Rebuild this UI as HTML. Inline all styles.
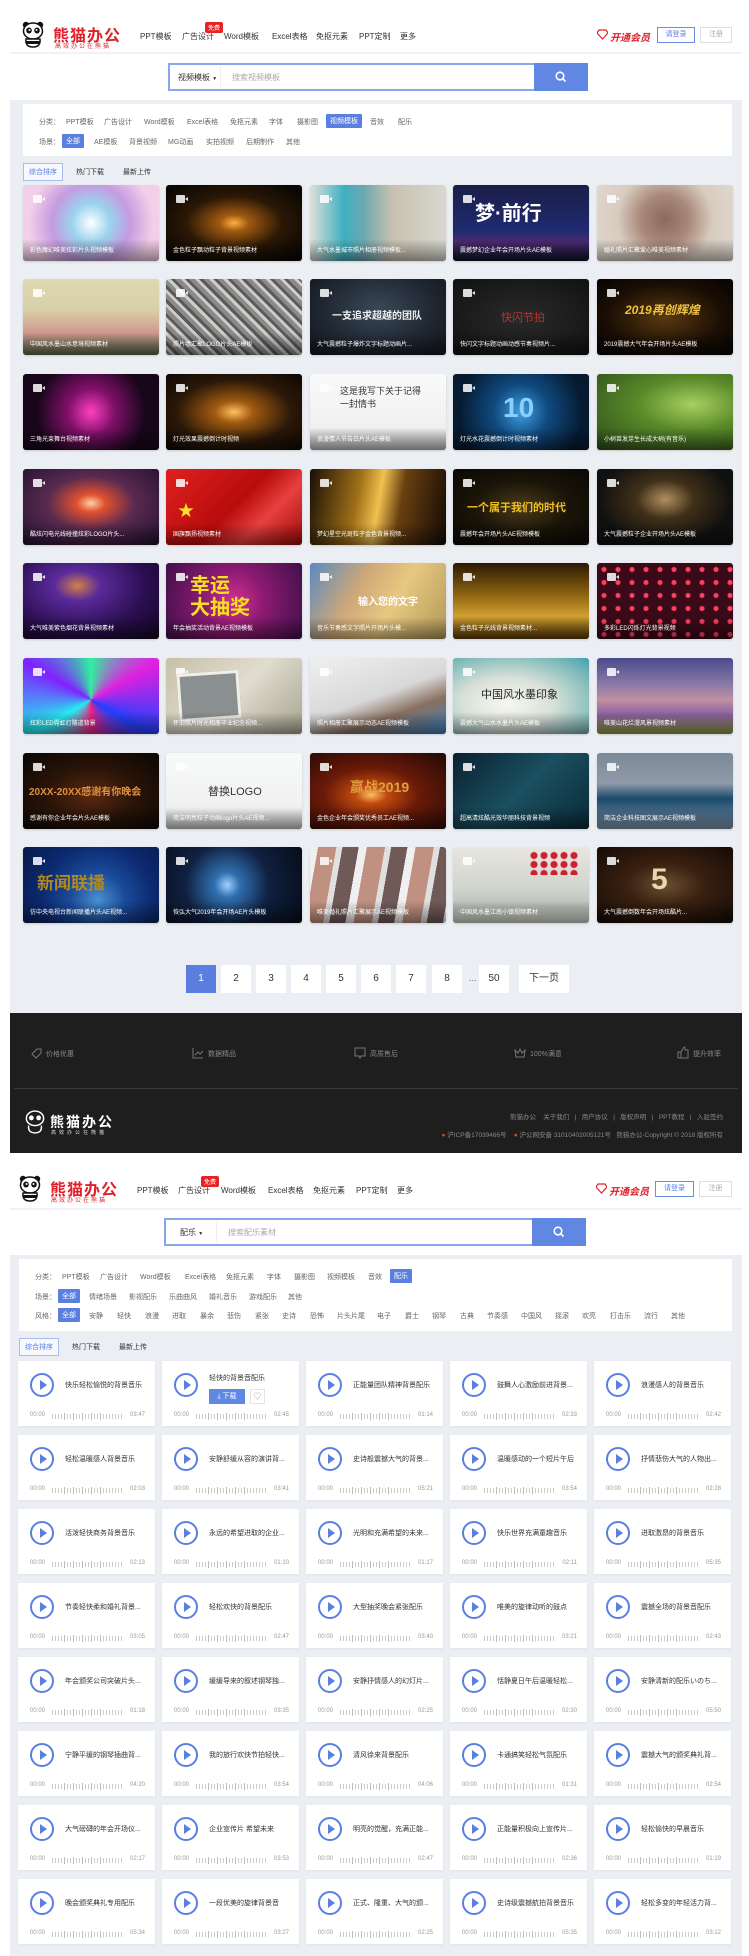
<!DOCTYPE html>
<html><head><meta charset="utf-8">
<style>
*{margin:0;padding:0;box-sizing:border-box}
body{width:749px;height:1956px;position:relative;background:#fff;font-family:"Liberation Sans","Noto Sans CJK SC",sans-serif;overflow:hidden;color:#333}
.a{position:absolute;white-space:nowrap}
.logo-t{font-size:16px;font-weight:bold;color:#e0202a;letter-spacing:1px}
.logo-s{font-size:6px;color:#e0202a;letter-spacing:2px}
.nav{font-size:8px;color:#333}
.badge{background:#e82222;color:#fff;font-size:6px;padding:1px 3px;border-radius:2px}
.vip{font-size:10px;color:#e0202a;font-weight:bold;font-style:italic}
.btn1{border:1px solid #6b8ee6;color:#5b7fe0;font-size:7px;text-align:center;line-height:14px;background:#fff}
.btn2{border:1px solid #ddd;color:#aaa;font-size:7px;text-align:center;line-height:14px}
.hline{position:absolute;left:10px;width:732px;height:2px;background:#f0f2f5}
.search{position:absolute;height:28px;border:2px solid #8aa6ec;background:#fff}
.search .sel{position:absolute;left:8px;top:7px;font-size:8px;color:#333}
.search .sep{position:absolute;left:50px;top:2px;width:1px;height:20px;background:#eee}
.search .ph{position:absolute;left:62px;top:7px;font-size:8px;color:#aaa}
.search .go{position:absolute;right:-2px;top:-2px;width:54px;height:28px;background:#6088e2}
.gray{position:absolute;left:10px;width:732px;background:#ebeef2}
.panel{position:absolute;background:#fff}
.f{position:absolute;font-size:7px;color:#666;white-space:nowrap}
.on{background:#5b7fe0;color:#fff;padding:2px 4px;border-radius:1px}
.sort{position:absolute;font-size:7px;color:#333}
.sortb{border:1px solid #a9bdf0;color:#5b7fe0;background:#f7f9ff;padding:3px 5px}
.th{position:absolute;width:136px;height:76px;border-radius:3px;overflow:hidden;box-shadow:0 1px 2px rgba(0,0,0,.15)}
.th i{position:absolute;left:10px;top:10px;width:9px;height:8px;background:rgba(255,255,255,.85);border-radius:1px}
.th i:after{content:"";position:absolute;right:-3px;top:2px;border-top:2px solid transparent;border-bottom:2px solid transparent;border-right:3px solid rgba(255,255,255,.85)}
.th b{position:absolute;left:0;right:0;bottom:0;height:22px;background:linear-gradient(transparent,rgba(0,0,0,.45))}
.th span{position:absolute;left:7px;bottom:7px;font-size:6px;color:#fff;white-space:nowrap;font-weight:normal}
.th em{position:absolute;font-style:normal;font-weight:bold;white-space:nowrap}
.pg{position:absolute;top:965px;height:28px;background:#fff;font-size:10px;color:#333;text-align:center;line-height:28px;width:30px}
.foot{position:absolute;left:10px;width:732px;top:1013px;height:140px;background:#1e1e1e}
.ft{position:absolute;font-size:7px;color:#888;white-space:nowrap}
.card{position:absolute;width:137px;height:65px;background:#fff;box-shadow:0 1px 2px rgba(0,0,0,.05)}
.card .p{position:absolute;left:12px;top:12px;width:24px;height:24px;border:2px solid #5b7fe0;border-radius:50%}
.card .p:after{content:"";position:absolute;left:8px;top:5px;border-top:5px solid transparent;border-bottom:5px solid transparent;border-left:7px solid #5b7fe0}
.card .t{position:absolute;left:47px;top:19px;font-size:7px;color:#333;white-space:nowrap}
.card .s{position:absolute;left:12px;top:51px;font-size:6px;color:#999}
.card .d{position:absolute;right:10px;top:51px;font-size:6px;color:#999}
.card .w{position:absolute;left:34px;right:32px;top:53px;height:5px;background:repeating-linear-gradient(90deg,#ccc 0 1px,transparent 1px 3px)}
.card .w:before{content:"";position:absolute;left:12px;top:-1px;width:40px;height:7px;background:repeating-linear-gradient(90deg,#bbb 0 1px,transparent 1px 9px)}
</style></head><body>

<svg class="a" style="left:22px;top:21px" width="22" height="27" viewBox="0 0 22 27"><circle cx="4" cy="4" r="3.2" fill="#111"/><circle cx="18" cy="4" r="3.2" fill="#111"/><ellipse cx="11" cy="10" rx="9.5" ry="8" fill="#fff" stroke="#111" stroke-width="1.5"/><ellipse cx="7" cy="9.5" rx="2.8" ry="3" fill="#111"/><ellipse cx="15" cy="9.5" rx="2.8" ry="3" fill="#111"/><circle cx="7.5" cy="9" r="1" fill="#fff"/><circle cx="14.5" cy="9" r="1" fill="#fff"/><path d="M4 18 Q3 26 11 26 Q19 26 18 18 Z" fill="#fff" stroke="#111" stroke-width="1.5"/><path d="M4 20 h14 v3 h-14z" fill="#111"/></svg>
<div class="a logo-t" style="left:53px;top:22px">熊猫办公</div>
<div class="a logo-s" style="left:55px;top:41px">高效办公在熊猫</div>
<div class="a nav" style="left:140px;top:31px">PPT模板</div>
<div class="a nav" style="left:182px;top:31px">广告设计</div>
<div class="a badge" style="left:205px;top:22px">免费</div>
<div class="a nav" style="left:224px;top:31px">Word模板</div>
<div class="a nav" style="left:272px;top:31px">Excel表格</div>
<div class="a nav" style="left:316px;top:31px">免抠元素</div>
<div class="a nav" style="left:359px;top:31px">PPT定制</div>
<div class="a nav" style="left:400px;top:31px">更多</div>
<svg class="a" style="left:597px;top:29px" width="11" height="11" viewBox="0 0 11 11"><path d="M2 1h7l2 3-5.5 6L0 4z" fill="none" stroke="#e0202a" stroke-width="1.2"/></svg>
<div class="a vip" style="left:610px;top:29px">开通会员</div>
<div class="a btn1" style="left:657px;top:27px;width:38px;height:16px">请登录</div>
<div class="a btn2" style="left:700px;top:27px;width:32px;height:16px">注册</div>
<div class="hline" style="top:52px"></div>

<div class="search" style="left:168px;top:63px;width:420px">
<div class="sel">视频模板 <span style="font-size:5px">▼</span></div><div class="sep"></div><div class="ph">搜索视频模板</div>
<div class="go"><svg style="position:absolute;left:21px;top:8px" width="12" height="12" viewBox="0 0 12 12"><circle cx="5" cy="5" r="3.8" fill="none" stroke="#fff" stroke-width="1.6"/><path d="M8 8l2.5 2.5" stroke="#fff" stroke-width="1.6"/></svg></div>
</div>

<div class="gray" style="top:100px;height:913px"></div>
<div class="panel" style="left:23px;top:104px;width:709px;height:52px"></div>
<div class="f" style="left:39px;top:117px">分类：</div>
<div class="f" style="left:66px;top:117px">PPT模板</div>
<div class="f" style="left:104px;top:117px">广告设计</div>
<div class="f" style="left:144px;top:117px">Word模板</div>
<div class="f" style="left:187px;top:117px">Excel表格</div>
<div class="f" style="left:230px;top:117px">免抠元素</div>
<div class="f" style="left:269px;top:117px">字体</div>
<div class="f" style="left:297px;top:117px">摄影图</div>
<div class="f on" style="left:326px;top:114px">视频模板</div>
<div class="f" style="left:370px;top:117px">音效</div>
<div class="f" style="left:398px;top:117px">配乐</div>
<div class="f" style="left:39px;top:137px">场景：</div>
<div class="f on" style="left:62px;top:134px">全部</div>
<div class="f" style="left:94px;top:137px">AE模板</div>
<div class="f" style="left:129px;top:137px">背景视频</div>
<div class="f" style="left:168px;top:137px">MG动画</div>
<div class="f" style="left:206px;top:137px">实拍视频</div>
<div class="f" style="left:246px;top:137px">后期制作</div>
<div class="f" style="left:286px;top:137px">其他</div>
<div class="sort sortb" style="left:23px;top:163px">综合排序</div>
<div class="sort" style="left:76px;top:167px">热门下载</div>
<div class="sort" style="left:123px;top:167px">最新上传</div>

<div class="th" style="left:23px;top:185px;background:radial-gradient(circle at 50% 50%,#fff 0,#9ad3ee 25%,#c59be0 50%,#f3cfe8 80%)"><i></i><b></b><span>彩色魔幻唯美炫彩片头视频模板</span></div>
<div class="th" style="left:166px;top:185px;background:radial-gradient(ellipse at 50% 50%,#ffb040 0,#a05a10 15%,#2a1805 50%,#0a0604 90%)"><i></i><b></b><span>金色粒子飘动粒子背景视频素材</span></div>
<div class="th" style="left:310px;top:185px;background:linear-gradient(90deg,#e0e0da 0,#3db0c0 25%,#6fa8b0 40%,#c8c0b0 60%,#d8d8d0 100%)"><i></i><b></b><span>大气水墨城市照片相册视频模板...</span></div>
<div class="th" style="left:453px;top:185px;background:linear-gradient(180deg,#1a1e48 0,#202a70 60%,#4a2a70 75%,#10142a 100%)"><i></i><em style="left:22px;top:12px;font-size:20px;color:#fff">梦·前行</em><b></b><span>震撼梦幻企业年会开场片头AE模板</span></div>
<div class="th" style="left:597px;top:185px;background:radial-gradient(circle at 50% 45%,#8a6a5a 0,#a88878 30%,#d8ccc0 60%,#e0d8d0 100%)"><i></i><b></b><span>婚礼照片汇聚爱心唯美视频素材</span></div>
<div class="th" style="left:23px;top:279px;background:linear-gradient(180deg,#e0d8b0 0,#d8d0a8 40%,#d09a90 70%,#5a6a48 100%)"><i></i><b></b><span>中国风水墨山水意境视频素材</span></div>
<div class="th" style="left:166px;top:279px;background:repeating-linear-gradient(45deg,#8a8a8a 0 4px,#d0ccc8 4px 7px,#5a5a5a 7px 10px)"><i></i><b></b><span>照片墙汇聚LOGO片头AE模板</span></div>
<div class="th" style="left:310px;top:279px;background:radial-gradient(ellipse at 50% 40%,#3a4858 0,#1e2630 60%,#12161c 100%)"><i></i><em style="left:22px;top:28px;font-size:10px;color:#eee">一支追求超越的团队</em><b></b><span>大气震撼粒子爆炸文字标题动画片...</span></div>
<div class="th" style="left:453px;top:279px;background:radial-gradient(ellipse at 50% 50%,#2a2a2a 0,#111 100%)"><i></i><em style="left:48px;top:30px;font-size:11px;color:#c03030;font-weight:normal">快闪节拍</em><b></b><span>快闪文字标题动画动感节奏视频片...</span></div>
<div class="th" style="left:597px;top:279px;background:radial-gradient(ellipse at 50% 50%,#5a3a10 0,#1a0e04 60%,#050302 100%)"><i></i><em style="left:28px;top:22px;font-size:12px;color:#f0c040;font-style:italic">2019再创辉煌</em><b></b><span>2019震撼大气年会开场片头AE模板</span></div>
<div class="th" style="left:23px;top:374px;background:radial-gradient(circle at 50% 50%,#ff40c0 0,#80106a 30%,#18061a 70%)"><i></i><b></b><span>三角光束舞台视频素材</span></div>
<div class="th" style="left:166px;top:374px;background:radial-gradient(ellipse at 50% 50%,#ffc060 0,#a05a10 20%,#2a1808 60%,#100804 100%)"><i></i><b></b><span>灯光效果震撼倒计时视频</span></div>
<div class="th" style="left:310px;top:374px;background:linear-gradient(180deg,#fafafa 0,#f0f0f0 70%,#c0c0c0 100%)"><i></i><em style="left:30px;top:10px;font-size:9px;color:#333;font-weight:normal">这是我写下关于记得<br>一封情书</em><b></b><span>浪漫情人节告白片头AE模板</span></div>
<div class="th" style="left:453px;top:374px;background:radial-gradient(circle at 50% 50%,#40a0e0 0,#104a80 35%,#061a30 80%)"><i></i><em style="left:50px;top:18px;font-size:28px;color:#8ad0ff">10</em><b></b><span>灯光水花震撼倒计时视频素材</span></div>
<div class="th" style="left:597px;top:374px;background:radial-gradient(ellipse at 70% 40%,#a8d060 0,#5a8a2a 40%,#2a4a18 100%)"><i></i><b></b><span>小树苗发芽生长成大树(有音乐)</span></div>
<div class="th" style="left:23px;top:469px;background:radial-gradient(ellipse at 50% 45%,#ffd0a0 0,#e05030 15%,#5a2a50 45%,#201030 100%)"><i></i><b></b><span>酷炫闪电光线碰撞炫彩LOGO片头...</span></div>
<div class="th" style="left:166px;top:469px;background:linear-gradient(135deg,#e02020 0,#b80c0c 50%,#e84040 70%,#a00808 100%)"><i></i><em style="left:12px;top:28px;font-size:16px;color:#f8e030">★</em><b></b><span>国旗飘扬视频素材</span></div>
<div class="th" style="left:310px;top:469px;background:linear-gradient(100deg,#1a1006 0,#a07018 35%,#f0c050 50%,#6a4010 65%,#140a04 100%)"><i></i><b></b><span>梦幻星空光斑粒子金色背景视频...</span></div>
<div class="th" style="left:453px;top:469px;background:radial-gradient(ellipse at 50% 50%,#4a3a18 0,#1a1408 50%,#0a0804 100%)"><i></i><em style="left:14px;top:30px;font-size:11px;color:#f0c020">一个属于我们的时代</em><b></b><span>震撼年会开场片头AE视频模板</span></div>
<div class="th" style="left:597px;top:469px;background:radial-gradient(ellipse at 50% 40%,#b09060 0,#403018 30%,#101010 70%)"><i></i><b></b><span>大气震撼粒子企业开场片头AE模板</span></div>
<div class="th" style="left:23px;top:563px;background:radial-gradient(ellipse at 40% 30%,#d0804a 0,#5a2a9a 20%,#2a0e50 60%,#10061e 100%)"><i></i><b></b><span>大气唯美紫色烟花背景视频素材</span></div>
<div class="th" style="left:166px;top:563px;background:radial-gradient(circle at 50% 50%,#d03090 0,#8a1a70 40%,#40104a 100%)"><i></i><em style="left:24px;top:12px;font-size:20px;color:#f8e020;line-height:22px">幸运<br>大抽奖</em><b></b><span>年会抽奖活动背景AE视频模板</span></div>
<div class="th" style="left:310px;top:563px;background:linear-gradient(120deg,#5a8ac0 0,#d0a878 35%,#e8c880 60%,#b09858 100%)"><i></i><em style="left:48px;top:30px;font-size:10px;color:#fff">输入您的文字</em><b></b><span>音乐节奏感文字照片开场片头模...</span></div>
<div class="th" style="left:453px;top:563px;background:linear-gradient(180deg,#2a1a04 0,#8a6010 40%,#d0a030 70%,#5a3a08 100%)"><i></i><b></b><span>金色粒子光线背景视频素材...</span></div>
<div class="th" style="left:597px;top:563px;background:radial-gradient(circle,#ff4060 0 2px,transparent 3px) 0 0/14px 13px,#3a0a18"><i></i><b></b><span>多彩LED闪烁灯光背景视频</span></div>
<div class="th" style="left:23px;top:658px;background:conic-gradient(from 0deg at 50% 55%,#30f0a0,#e020e0,#2040ff,#f02080,#20f0f0,#8020ff,#30f0a0)"><i></i><b></b><span>炫彩LED霓虹灯隧道背景</span></div>
<div class="th" style="left:166px;top:658px;background:linear-gradient(135deg,#c8c0a8 0,#e0dccf 50%,#a8a490 100%)"><i></i><div class="a" style="left:12px;top:14px;width:62px;height:48px;background:#8a9090;border:3px solid #f0f0e8;transform:rotate(-4deg)"></div><b></b><span>怀旧照片时光相册毕业纪念视频...</span></div>
<div class="th" style="left:310px;top:658px;background:linear-gradient(160deg,#f0f0f0 0,#d8d8d8 50%,#8a7060 70%,#3a80c0 100%)"><i></i><b></b><span>照片相册汇聚展示动态AE视频模板</span></div>
<div class="th" style="left:453px;top:658px;background:radial-gradient(ellipse at 40% 60%,#f8f8f0 0,#d8e0d8 40%,#7ab8b8 80%,#40a0b0 100%)"><i></i><em style="left:28px;top:28px;font-size:11px;color:#222;font-weight:normal">中国风水墨印象</em><b></b><span>震撼大气山水水墨片头AE模板</span></div>
<div class="th" style="left:597px;top:658px;background:linear-gradient(180deg,#4a4a8a 0,#8a7aa8 35%,#c090a0 55%,#8a60a0 75%,#90a040 100%)"><i></i><b></b><span>唯美山花烂漫风景视频素材</span></div>
<div class="th" style="left:23px;top:753px;background:radial-gradient(ellipse at 50% 55%,#5a2a10 0,#2a1408 45%,#0a0604 100%)"><i></i><em style="left:6px;top:30px;font-size:10px;color:#e09040">20XX-20XX感谢有你晚会</em><b></b><span>感谢有你企业年会片头AE模板</span></div>
<div class="th" style="left:166px;top:753px;background:linear-gradient(180deg,#f8fafa 0,#f0f0f0 75%,#c8c8c8 100%)"><i></i><em style="left:42px;top:30px;font-size:11px;color:#333;font-weight:normal">替换LOGO</em><b></b><span>简洁明亮粒子动画logo片头AE视频...</span></div>
<div class="th" style="left:310px;top:753px;background:radial-gradient(ellipse at 45% 55%,#ffc060 0,#c04a10 15%,#6a1a08 45%,#200806 100%)"><i></i><em style="left:40px;top:24px;font-size:14px;color:#e0a040">赢战2019</em><b></b><span>金色企业年会颁奖优秀员工AE视频...</span></div>
<div class="th" style="left:453px;top:753px;background:linear-gradient(135deg,#0a2030 0,#1a5060 50%,#0a2a38 100%)"><i></i><b></b><span>超高清炫酷光效华丽科技背景视频</span></div>
<div class="th" style="left:597px;top:753px;background:linear-gradient(180deg,#7a8a98 0,#909aa8 40%,#1a4a6a 60%,#8098b0 100%)"><i></i><b></b><span>简洁企业科技图文展示AE视频模板</span></div>
<div class="th" style="left:23px;top:847px;background:radial-gradient(circle at 55% 70%,#4a90d0 0,#1a4a9a 30%,#0c2a70 60%,#081a4a 100%)"><i></i><em style="left:14px;top:22px;font-size:17px;color:#b08a20">新闻联播</em><b></b><span>仿中央电视台新闻联播片头AE视频...</span></div>
<div class="th" style="left:166px;top:847px;background:radial-gradient(circle at 45% 50%,#a0d0ff 0,#3070b0 15%,#102040 50%,#060c1a 100%)"><i></i><b></b><span>恢弘大气2019年会开场AE片头模板</span></div>
<div class="th" style="left:310px;top:847px;background:repeating-linear-gradient(100deg,#f0f0f0 0 8px,#c09080 8px 26px,#e0e0e0 26px 32px,#705a58 32px 48px)"><i></i><b></b><span>唯美婚礼照片汇聚展示AE视频模板</span></div>
<div class="th" style="left:453px;top:847px;background:linear-gradient(180deg,#e8e6e0 0,#d0d4cc 55%,#b8c0b8 80%,#d8d8d0 100%)"><i></i><div class="a" style="right:10px;top:4px;width:50px;height:24px;background:radial-gradient(circle,#d02030 0 3px,transparent 4px) 0 0/10px 9px"></div><b></b><span>中国风水墨江南小镇视频素材</span></div>
<div class="th" style="left:597px;top:847px;background:radial-gradient(ellipse at 50% 50%,#6a5030 0,#3a2010 40%,#140a06 100%)"><i></i><em style="left:54px;top:16px;font-size:30px;color:#e8d8b0">5</em><b></b><span>大气震撼倒数年会开场炫酷片...</span></div>

<div class="pg" style="left:186px;background:#5b7fe0;color:#fff">1</div>
<div class="pg" style="left:221px">2</div>
<div class="pg" style="left:256px">3</div>
<div class="pg" style="left:291px">4</div>
<div class="pg" style="left:326px">5</div>
<div class="pg" style="left:361px">6</div>
<div class="pg" style="left:396px">7</div>
<div class="pg" style="left:432px">8</div>
<div class="a" style="left:469px;top:973px;font-size:9px;color:#666">...</div>
<div class="pg" style="left:479px">50</div>
<div class="pg" style="left:519px;width:50px">下一页</div>

<div class="foot">
<svg class="a" style="left:20px;top:34px" width="12" height="12" viewBox="0 0 12 12"><path d="M2 7l5-5h4v4l-5 5z" fill="none" stroke="#777"/></svg>
<div class="ft" style="left:36px;top:36px">价格优惠</div>
<svg class="a" style="left:182px;top:34px" width="12" height="12" viewBox="0 0 12 12"><path d="M1 1v10h10M3 8l3-3 2 2 3-3" fill="none" stroke="#777"/></svg>
<div class="ft" style="left:198px;top:36px">数据精品</div>
<svg class="a" style="left:344px;top:34px" width="12" height="12" viewBox="0 0 12 12"><path d="M1 1h10v8H7l-1 2-1-2H1z" fill="none" stroke="#777"/></svg>
<div class="ft" style="left:360px;top:36px">高质售后</div>
<svg class="a" style="left:504px;top:34px" width="12" height="12" viewBox="0 0 12 12"><path d="M1 3l3 3 2-4 2 4 3-3-1 7H2z" fill="none" stroke="#777"/></svg>
<div class="ft" style="left:520px;top:36px">100%满意</div>
<svg class="a" style="left:667px;top:33px" width="12" height="13" viewBox="0 0 12 13"><path d="M1 6h3v6H1zM4 6l3-5c1 0 1.5 1 1 3h3v8H4" fill="none" stroke="#777"/></svg>
<div class="ft" style="left:683px;top:36px">提升效率</div>
<div class="a" style="left:4px;top:75px;width:724px;height:1px;background:#383838"></div>
<svg class="a" style="left:15px;top:95px" width="20" height="27" viewBox="0 0 22 27"><ellipse cx="11" cy="10" rx="9.5" ry="8" fill="none" stroke="#fff" stroke-width="1.6"/><ellipse cx="7" cy="9.5" rx="2.6" ry="2.8" fill="#fff"/><ellipse cx="15" cy="9.5" rx="2.6" ry="2.8" fill="#fff"/><path d="M4 18 Q3 26 11 26 Q19 26 18 18" fill="none" stroke="#fff" stroke-width="1.6"/></svg>
<div class="a" style="left:40px;top:99px;font-size:14px;font-weight:bold;color:#fff;letter-spacing:2px">熊猫办公</div>
<div class="a" style="left:41px;top:116px;font-size:5px;color:#ddd;letter-spacing:3px">高效办公在熊猫</div>
<div class="ft" style="right:19px;top:98px;font-size:6.5px">熊猫办公 &nbsp;&nbsp; 关于我们 &nbsp;&nbsp;| &nbsp;&nbsp;用户协议 &nbsp;&nbsp;| &nbsp;&nbsp;版权声明 &nbsp;&nbsp;| &nbsp;&nbsp;PPT教程 &nbsp;&nbsp;| &nbsp;&nbsp;入驻签约</div>
<div class="ft" style="right:19px;top:116px;font-size:6.5px"><span style="color:#d84a20">●</span> 沪ICP备17039466号 &nbsp;&nbsp;&nbsp;<span style="color:#d84a20">●</span> 沪公网安备 31010402005121号 &nbsp; 熊猫办公-Copyright © 2018 版权所有</div>
</div>

<svg class="a" style="left:19px;top:1175px" width="22" height="27" viewBox="0 0 22 27"><circle cx="4" cy="4" r="3.2" fill="#111"/><circle cx="18" cy="4" r="3.2" fill="#111"/><ellipse cx="11" cy="10" rx="9.5" ry="8" fill="#fff" stroke="#111" stroke-width="1.5"/><ellipse cx="7" cy="9.5" rx="2.8" ry="3" fill="#111"/><ellipse cx="15" cy="9.5" rx="2.8" ry="3" fill="#111"/><circle cx="7.5" cy="9" r="1" fill="#fff"/><circle cx="14.5" cy="9" r="1" fill="#fff"/><path d="M4 18 Q3 26 11 26 Q19 26 18 18 Z" fill="#fff" stroke="#111" stroke-width="1.5"/><path d="M4 20 h14 v3 h-14z" fill="#111"/></svg>
<div class="a logo-t" style="left:50px;top:1176px">熊猫办公</div>
<div class="a logo-s" style="left:51px;top:1195px">高效办公在熊猫</div>
<div class="a nav" style="left:137px;top:1185px">PPT模板</div>
<div class="a nav" style="left:178px;top:1185px">广告设计</div>
<div class="a badge" style="left:201px;top:1176px">免费</div>
<div class="a nav" style="left:221px;top:1185px">Word模板</div>
<div class="a nav" style="left:268px;top:1185px">Excel表格</div>
<div class="a nav" style="left:313px;top:1185px">免抠元素</div>
<div class="a nav" style="left:356px;top:1185px">PPT定制</div>
<div class="a nav" style="left:397px;top:1185px">更多</div>
<svg class="a" style="left:596px;top:1183px" width="11" height="11" viewBox="0 0 11 11"><path d="M2 1h7l2 3-5.5 6L0 4z" fill="none" stroke="#e0202a" stroke-width="1.2"/></svg>
<div class="a vip" style="left:609px;top:1183px">开通会员</div>
<div class="a btn1" style="left:655px;top:1181px;width:39px;height:16px">请登录</div>
<div class="a btn2" style="left:699px;top:1181px;width:33px;height:16px">注册</div>
<div class="hline" style="top:1208px"></div>

<div class="search" style="left:164px;top:1218px;width:422px">
<div class="sel" style="left:14px">配乐 <span style="font-size:5px">▼</span></div><div class="sep"></div><div class="ph">搜索配乐素材</div>
<div class="go"><svg style="position:absolute;left:21px;top:8px" width="12" height="12" viewBox="0 0 12 12"><circle cx="5" cy="5" r="3.8" fill="none" stroke="#fff" stroke-width="1.6"/><path d="M8 8l2.5 2.5" stroke="#fff" stroke-width="1.6"/></svg></div>
</div>

<div class="gray" style="top:1255px;height:701px"></div>
<div class="panel" style="left:19px;top:1259px;width:713px;height:72px"></div>
<div class="f" style="left:35px;top:1272px">分类：</div>
<div class="f" style="left:62px;top:1272px">PPT模板</div>
<div class="f" style="left:100px;top:1272px">广告设计</div>
<div class="f" style="left:140px;top:1272px">Word模板</div>
<div class="f" style="left:185px;top:1272px">Excel表格</div>
<div class="f" style="left:226px;top:1272px">免抠元素</div>
<div class="f" style="left:267px;top:1272px">字体</div>
<div class="f" style="left:294px;top:1272px">摄影图</div>
<div class="f" style="left:327px;top:1272px">视频模板</div>
<div class="f" style="left:368px;top:1272px">音效</div>
<div class="f on" style="left:390px;top:1269px">配乐</div>
<div class="f" style="left:35px;top:1292px">场景：</div>
<div class="f on" style="left:58px;top:1289px">全部</div>
<div class="f" style="left:89px;top:1292px">情绪场景</div>
<div class="f" style="left:129px;top:1292px">影视配乐</div>
<div class="f" style="left:169px;top:1292px">乐曲曲风</div>
<div class="f" style="left:209px;top:1292px">婚礼音乐</div>
<div class="f" style="left:249px;top:1292px">游戏配乐</div>
<div class="f" style="left:288px;top:1292px">其他</div>
<div class="f" style="left:35px;top:1311px">风格：</div>
<div class="f on" style="left:58px;top:1308px">全部</div>
<div class="f" style="left:89px;top:1311px">安静</div>
<div class="f" style="left:117px;top:1311px">轻快</div>
<div class="f" style="left:145px;top:1311px">浪漫</div>
<div class="f" style="left:172px;top:1311px">进取</div>
<div class="f" style="left:200px;top:1311px">暴余</div>
<div class="f" style="left:227px;top:1311px">悲伤</div>
<div class="f" style="left:255px;top:1311px">紧张</div>
<div class="f" style="left:282px;top:1311px">史诗</div>
<div class="f" style="left:310px;top:1311px">恐怖</div>
<div class="f" style="left:337px;top:1311px">片头片尾</div>
<div class="f" style="left:377px;top:1311px">电子</div>
<div class="f" style="left:405px;top:1311px">爵士</div>
<div class="f" style="left:432px;top:1311px">钢琴</div>
<div class="f" style="left:460px;top:1311px">古典</div>
<div class="f" style="left:487px;top:1311px">节奏感</div>
<div class="f" style="left:521px;top:1311px">中国风</div>
<div class="f" style="left:555px;top:1311px">摇滚</div>
<div class="f" style="left:582px;top:1311px">欢亮</div>
<div class="f" style="left:610px;top:1311px">打击乐</div>
<div class="f" style="left:644px;top:1311px">流行</div>
<div class="f" style="left:671px;top:1311px">其他</div>
<div class="sort sortb" style="left:19px;top:1338px">综合排序</div>
<div class="sort" style="left:72px;top:1342px">热门下载</div>
<div class="sort" style="left:119px;top:1342px">最新上传</div>

<div class="card" style="left:18px;top:1361px"><div class="p"></div><div class="t">快乐轻松愉悦的背景音乐</div><div class="s">00:00</div><div class="w"></div><div class="d">03:47</div></div>
<div class="card" style="left:162px;top:1361px"><div class="p"></div><div class="t" style="top:12px">轻快的背景音配乐</div><div class="a" style="left:47px;top:28px;width:36px;height:15px;background:#6088e2;color:#fff;font-size:7px;line-height:15px;text-align:center">⤓ 下载</div><div class="a" style="left:88px;top:28px;width:15px;height:15px;border:1px solid #e4e4e4;color:#999;font-size:8px;line-height:13px;text-align:center">♡</div><div class="s">00:00</div><div class="w"></div><div class="d">02:45</div></div>
<div class="card" style="left:306px;top:1361px"><div class="p"></div><div class="t">正能量团队精神背景配乐</div><div class="s">00:00</div><div class="w"></div><div class="d">01:14</div></div>
<div class="card" style="left:450px;top:1361px"><div class="p"></div><div class="t">鼓舞人心激励前进背景...</div><div class="s">00:00</div><div class="w"></div><div class="d">02:33</div></div>
<div class="card" style="left:594px;top:1361px"><div class="p"></div><div class="t">浪漫感人的背景音乐</div><div class="s">00:00</div><div class="w"></div><div class="d">02:42</div></div>

<div class="card" style="left:18px;top:1435px"><div class="p"></div><div class="t">轻松温暖感人背景音乐</div><div class="s">00:00</div><div class="w"></div><div class="d">02:03</div></div>
<div class="card" style="left:162px;top:1435px"><div class="p"></div><div class="t">安静舒缓从容的演讲背...</div><div class="s">00:00</div><div class="w"></div><div class="d">03:41</div></div>
<div class="card" style="left:306px;top:1435px"><div class="p"></div><div class="t">史诗般震撼大气的背景...</div><div class="s">00:00</div><div class="w"></div><div class="d">05:21</div></div>
<div class="card" style="left:450px;top:1435px"><div class="p"></div><div class="t">温暖感动的一个短片午后</div><div class="s">00:00</div><div class="w"></div><div class="d">03:54</div></div>
<div class="card" style="left:594px;top:1435px"><div class="p"></div><div class="t">抒情悲伤大气的人物出...</div><div class="s">00:00</div><div class="w"></div><div class="d">02:28</div></div>

<div class="card" style="left:18px;top:1509px"><div class="p"></div><div class="t">活泼轻快商务背景音乐</div><div class="s">00:00</div><div class="w"></div><div class="d">02:13</div></div>
<div class="card" style="left:162px;top:1509px"><div class="p"></div><div class="t">永远的希望进取的企业...</div><div class="s">00:00</div><div class="w"></div><div class="d">01:10</div></div>
<div class="card" style="left:306px;top:1509px"><div class="p"></div><div class="t">光明和充满希望的未来...</div><div class="s">00:00</div><div class="w"></div><div class="d">01:17</div></div>
<div class="card" style="left:450px;top:1509px"><div class="p"></div><div class="t">快乐世界充满童趣音乐</div><div class="s">00:00</div><div class="w"></div><div class="d">02:11</div></div>
<div class="card" style="left:594px;top:1509px"><div class="p"></div><div class="t">进取激昂的背景音乐</div><div class="s">00:00</div><div class="w"></div><div class="d">05:35</div></div>

<div class="card" style="left:18px;top:1583px"><div class="p"></div><div class="t">节奏轻快柔和婚礼背景...</div><div class="s">00:00</div><div class="w"></div><div class="d">03:05</div></div>
<div class="card" style="left:162px;top:1583px"><div class="p"></div><div class="t">轻松欢快的背景配乐</div><div class="s">00:00</div><div class="w"></div><div class="d">02:47</div></div>
<div class="card" style="left:306px;top:1583px"><div class="p"></div><div class="t">大型抽奖晚会紧张配乐</div><div class="s">00:00</div><div class="w"></div><div class="d">03:40</div></div>
<div class="card" style="left:450px;top:1583px"><div class="p"></div><div class="t">唯美的旋律动听的鼓点</div><div class="s">00:00</div><div class="w"></div><div class="d">03:21</div></div>
<div class="card" style="left:594px;top:1583px"><div class="p"></div><div class="t">震撼全场的背景音配乐</div><div class="s">00:00</div><div class="w"></div><div class="d">02:43</div></div>

<div class="card" style="left:18px;top:1657px"><div class="p"></div><div class="t">年会颁奖公司突破片头...</div><div class="s">00:00</div><div class="w"></div><div class="d">01:18</div></div>
<div class="card" style="left:162px;top:1657px"><div class="p"></div><div class="t">缓缓导来的叙述钢琴独...</div><div class="s">00:00</div><div class="w"></div><div class="d">03:35</div></div>
<div class="card" style="left:306px;top:1657px"><div class="p"></div><div class="t">安静抒情感人的幻灯片...</div><div class="s">00:00</div><div class="w"></div><div class="d">02:25</div></div>
<div class="card" style="left:450px;top:1657px"><div class="p"></div><div class="t">恬静夏日午后温暖轻松...</div><div class="s">00:00</div><div class="w"></div><div class="d">02:30</div></div>
<div class="card" style="left:594px;top:1657px"><div class="p"></div><div class="t">安静清新的配乐いのち...</div><div class="s">00:00</div><div class="w"></div><div class="d">05:50</div></div>

<div class="card" style="left:18px;top:1731px"><div class="p"></div><div class="t">宁静平缓的钢琴插曲背...</div><div class="s">00:00</div><div class="w"></div><div class="d">04:20</div></div>
<div class="card" style="left:162px;top:1731px"><div class="p"></div><div class="t">我的旅行欢快节拍轻快...</div><div class="s">00:00</div><div class="w"></div><div class="d">03:54</div></div>
<div class="card" style="left:306px;top:1731px"><div class="p"></div><div class="t">清风徐来背景配乐</div><div class="s">00:00</div><div class="w"></div><div class="d">04:06</div></div>
<div class="card" style="left:450px;top:1731px"><div class="p"></div><div class="t">卡通搞笑轻松气氛配乐</div><div class="s">00:00</div><div class="w"></div><div class="d">01:31</div></div>
<div class="card" style="left:594px;top:1731px"><div class="p"></div><div class="t">震撼大气的颁奖典礼背...</div><div class="s">00:00</div><div class="w"></div><div class="d">02:54</div></div>

<div class="card" style="left:18px;top:1805px"><div class="p"></div><div class="t">大气磅礴的年会开场仪...</div><div class="s">00:00</div><div class="w"></div><div class="d">02:17</div></div>
<div class="card" style="left:162px;top:1805px"><div class="p"></div><div class="t">企业宣传片 希望未来</div><div class="s">00:00</div><div class="w"></div><div class="d">03:53</div></div>
<div class="card" style="left:306px;top:1805px"><div class="p"></div><div class="t">明亮的觉醒，充满正能...</div><div class="s">00:00</div><div class="w"></div><div class="d">02:47</div></div>
<div class="card" style="left:450px;top:1805px"><div class="p"></div><div class="t">正能量积极向上宣传片...</div><div class="s">00:00</div><div class="w"></div><div class="d">02:36</div></div>
<div class="card" style="left:594px;top:1805px"><div class="p"></div><div class="t">轻松愉快的早晨音乐</div><div class="s">00:00</div><div class="w"></div><div class="d">01:19</div></div>

<div class="card" style="left:18px;top:1879px"><div class="p"></div><div class="t">晚会颁奖典礼专用配乐</div><div class="s">00:00</div><div class="w"></div><div class="d">05:34</div></div>
<div class="card" style="left:162px;top:1879px"><div class="p"></div><div class="t">一段优美的旋律背景音</div><div class="s">00:00</div><div class="w"></div><div class="d">03:27</div></div>
<div class="card" style="left:306px;top:1879px"><div class="p"></div><div class="t">正式、隆重、大气的颁...</div><div class="s">00:00</div><div class="w"></div><div class="d">02:25</div></div>
<div class="card" style="left:450px;top:1879px"><div class="p"></div><div class="t">史诗级震撼航拍背景音乐</div><div class="s">00:00</div><div class="w"></div><div class="d">05:35</div></div>
<div class="card" style="left:594px;top:1879px"><div class="p"></div><div class="t">轻松多变的年轻活力背...</div><div class="s">00:00</div><div class="w"></div><div class="d">03:12</div></div>

</body></html>
